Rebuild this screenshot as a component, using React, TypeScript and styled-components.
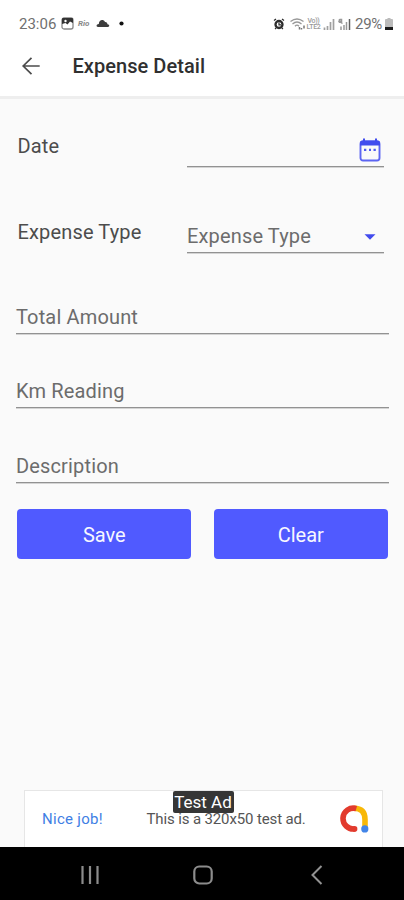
import React from 'react';
import styled, { createGlobalStyle } from 'styled-components';

const GlobalStyle = createGlobalStyle`
  * { box-sizing: border-box; }
  body { margin: 0; background: #fafafa; }
`;

const Screen = styled.div`
  display: flex;
  flex-direction: column;
  width: 404px;
  height: 900px;
  overflow: hidden;
  background: #fafafa;
  font-family: Roboto, "Liberation Sans", sans-serif;
  color: #3c3c3c;
`;

const Header = styled.header`
  height: 99px;
  flex: none;
  background: #fff;
  border-bottom: 3px solid #eeeeee;
`;

const StatusBar = styled.div`
  display: flex;
  align-items: center;
  height: 47px;
  padding: 0 11px 0 19px;
  font-size: 15px;
  color: #707070;
  white-space: nowrap;
  svg { display: block; flex: none; }
`;

const Clock = styled.span`
  width: 42px;
`;

const Brand = styled.span`
  width: 22px;
  padding-left: 4px;
  font-size: 8px;
  font-weight: 700;
  font-style: italic;
  color: #888;
`;

const StatusGroup = styled.div`
  display: flex;
  align-items: center;
`;

const SystemGroup = styled(StatusGroup)`
  margin-left: auto;
`;

const NetworkLabel = styled.span`
  display: flex;
  flex-direction: column;
  width: 17px;
  font-size: 7px;
  font-weight: 500;
  line-height: 6px;
  letter-spacing: -0.3px;
  text-align: center;
  color: #999;
`;

const Percent = styled.span`
  width: 30px;
  margin-left: 4px;
  font-size: 15px;
  letter-spacing: -0.3px;
`;

const Spacer = styled.span<{ $width: number }>`
  flex: none;
  width: ${(p) => p.$width}px;
`;

const TitleBar = styled.div`
  display: flex;
  align-items: center;
  height: 38px;
  padding-left: 20px;
  gap: 30.5px;
`;

const Title = styled.h1`
  margin: 0;
  font-size: 20px;
  font-weight: 500;
  line-height: 24px;
  letter-spacing: 0.05px;
  color: #303030;
`;

const IconButton = styled.button`
  display: flex;
  padding: 0;
  border: 0;
  background: none;
`;

const Form = styled.main`
  flex: 1;
  display: flex;
  flex-direction: column;
  padding: 0 15px 0 16px;
`;

const LabelRow = styled.div<{ $height: number }>`
  display: grid;
  grid-template-columns: 171px 196.5px;
  align-items: end;
  height: ${(p) => p.$height}px;
`;

const Label = styled.label`
  padding: 0 0 9px 1.5px;
  font-size: 20px;
  line-height: 24px;
  letter-spacing: 0.15px;
  color: #4c4c4c;
`;

const Field = styled.div<{ $height: number }>`
  display: flex;
  align-items: flex-end;
  justify-content: space-between;
  height: ${(p) => p.$height}px;
  width: 100%;
  padding-bottom: 4px;
  border-bottom: 1px solid #929292;
  box-shadow: 0 1px 0 #d4d4d4;
  font-size: 20px;
  line-height: 24px;
  letter-spacing: 0.15px;
  color: #6c6c6c;
`;

const FieldIcon = styled.span<{ $right: number; $bottom: number }>`
  display: flex;
  padding-right: ${(p) => p.$right}px;
  padding-bottom: ${(p) => p.$bottom}px;
`;

const Actions = styled.div`
  display: grid;
  grid-template-columns: 174px 174px;
  gap: 22.5px;
  padding: 26px 0 0 1.3px;
`;

const ActionButton = styled.button`
  height: 49.5px;
  padding: 2px 0 0;
  border: 0;
  border-radius: 4px;
  background: #505aff;
  color: #f7f7ff;
  font: 400 20px Roboto, sans-serif;
`;

const AdBanner = styled.aside`
  position: relative;
  display: grid;
  grid-template-columns: 122px 193.5px 1fr;
  align-items: center;
  flex: none;
  width: 359px;
  height: 57px;
  margin-left: 23.5px;
  background: #fff;
  border: 1.5px solid #e6e6e6;
  border-bottom: 0;
  font-size: 15px;
`;

const AdPraise = styled.span`
  padding-left: 17.5px;
  letter-spacing: 0.3px;
  color: #3f80e4;
`;

const AdText = styled.span`
  letter-spacing: -0.13px;
  white-space: nowrap;
  color: #555;
`;

const AdTag = styled.span`
  position: absolute;
  top: 0;
  left: 148px;
  width: 61px;
  height: 22px;
  border-radius: 2px;
  background: #363636;
  color: #fff;
  font-size: 17px;
  line-height: 23px;
  text-align: center;
  white-space: nowrap;
`;

const NavBar = styled.nav`
  display: grid;
  grid-template-columns: 1fr 1fr 1fr;
  align-items: center;
  justify-items: center;
  flex: none;
  height: 53px;
  padding: 2px 31px 0 33px;
  background: #000;
`;

const PictureIcon = () => (
  <svg width="13" height="13" viewBox="0 0 13 13">
    <rect x="1" y="1" width="11" height="11" rx="2" fill="#fff" stroke="#888" strokeWidth="1.3" />
    <path d="M1 7V2q0-1 1-1h9q1 0 1 1v4L9 4.500 6.500 7.500 4.500 6z" fill="#333" />
    <circle cx="4.500" cy="4" r="1.200" fill="#fff" />
  </svg>
);

const CloudIcon = () => (
  <svg width="14" height="9" viewBox="0 0 14 9">
    <path d="M2 8C0 8 0 5 2.800 5 3 .5 7.500 0 9 3 11 2.800 11.500 4.500 11.500 5.300 14 5.500 13.500 8 12 8z" fill="#3c3c3c" />
  </svg>
);

const DotIcon = () => (
  <svg width="5" height="5" viewBox="0 0 5 5"><circle cx="2.500" cy="2.500" r="2.100" fill="#111" /></svg>
);

const AlarmIcon = () => (
  <svg width="12" height="12" viewBox="0 0 12 12" fill="none" stroke="#2c2c2c">
    <circle cx="6" cy="6.500" r="3.500" strokeWidth="2.300" />
    <path d="M1 2.500 3 1M11 2.500 9 1M6 4.500v2.300h2M2 11l1.200-1M10 11l-1.200-1" strokeWidth="1.200" />
  </svg>
);

const WifiIcon = () => (
  <svg width="15" height="12" viewBox="0 0 15 12" fill="none" stroke="#999" strokeWidth="1.300">
    <path d="M.5 3.500Q7-1.500 13.500 3.500M2.500 6Q7 2 11.500 6M5 8.300Q7 6 9 8.300" />
    <path d="M9.500 9v2.500M11.500 10v1.500M14 7.500v3" stroke="#777" strokeWidth="1.500" />
  </svg>
);

const SignalIcon = () => (
  <svg width="12" height="12" viewBox="0 0 12 12" stroke="#a0a0a0" strokeWidth="1.700">
    <path d="M1.500 9.500V12M4.500 8v4M7.500 4v8M10.500 1v11" />
  </svg>
);

const RoamingSignalIcon = () => (
  <svg width="13" height="12" viewBox="0 0 13 12" fill="none" stroke="#999" strokeWidth="1.500">
    <path d="M1.500 1v4M1.500 1.500h2v2h-2l3 2M3 8.500V12M6 7v5M8.500 4v8" />
    <path d="M11.500 1v11" stroke="#606060" />
  </svg>
);

const BatteryIcon = () => (
  <svg width="8" height="12" viewBox="0 0 8 12">
    <path d="M2.500 0h3v1H7q1 0 1 1v10H0V2q0-1 1-1h1.500z" fill="#bbb" />
    <rect y="9" width="8" height="3" fill="#1c1c1c" />
  </svg>
);

const BackArrow = () => (
  <svg width="22" height="22" viewBox="0 0 22 22" fill="none" stroke="#4c4c4c" strokeWidth="1.700">
    <path d="M19.700 11H3M11.500 2.800 3.200 11l8.300 8.200" />
  </svg>
);

const CalendarIcon = () => (
  <svg width="22" height="24" viewBox="0 0 22 24">
    <rect x="1.500" y="3.500" width="19" height="19" rx="2.500" fill="#fafafa" stroke="#5c65f2" strokeWidth="1.900" />
    <path d="M1 7.500V5q0-2.500 2.500-2.500H4V.5h2v2h10v-2h2v2h.5Q21 2.500 21 5v2.500z" fill="#414cee" />
    <path d="M5 10.700h2.300V13H5zM10 10.700h2V13h-2zM14.500 10.700h2.300V13h-2.300z" fill="#505aee" />
  </svg>
);

const CaretIcon = () => (
  <svg width="12" height="6" viewBox="0 0 12 6"><path d="M.5 .3h11L6 5.800z" fill="#424bed" /></svg>
);

const AdLogo = () => (
  <svg width="30" height="30" viewBox="0 0 30 30" fill="none" strokeWidth="5.600">
    <path d="M14 4.300Q25 4.300 25 15.500V24" stroke="#f8b807" />
    <path d="M16.300 4.600A10.400 10.400 0 1 0 14.800 24.900" stroke="#e23b2e" />
    <circle cx="14.600" cy="24.900" r="2.800" fill="#e23b2e" stroke="none" />
    <circle cx="24.800" cy="24.900" r="3.600" fill="#4285e8" stroke="none" />
  </svg>
);

const RecentsIcon = () => (
  <svg width="20" height="20" viewBox="0 0 20 20" stroke="#8c8c8c" strokeWidth="2.200">
    <path d="M2.500 1v18M10 1v18M17.500 1v18" />
  </svg>
);

const HomeIcon = () => (
  <svg width="20" height="20" viewBox="0 0 20 20" fill="none" stroke="#8c8c8c" strokeWidth="2.200">
    <rect x="1.300" y="1.500" width="17.400" height="17" rx="5" />
  </svg>
);

const BackIcon = () => (
  <svg width="20" height="20" viewBox="0 0 20 20" fill="none" stroke="#929292" strokeWidth="2">
    <path d="M15.500 1 6.500 10l9 9" />
  </svg>
);

const TextField = ({ label, height }: { label: string; height: number }) => (
  <Field $height={height}>{label}</Field>
);

export default function App() {
  return (
    <Screen>
      <GlobalStyle />
      <Header>
        <StatusBar>
          <StatusGroup>
            <Clock>23:06</Clock>
            <PictureIcon />
            <Brand>Rio</Brand>
            <CloudIcon />
            <Spacer $width={9} />
            <DotIcon />
          </StatusGroup>
          <SystemGroup>
            <AlarmIcon />
            <Spacer $width={5} />
            <WifiIcon />
            <NetworkLabel>
              <span>Vo))</span>
              <span>LTE2</span>
            </NetworkLabel>
            <Spacer $width={1} />
            <SignalIcon />
            <Spacer $width={3} />
            <RoamingSignalIcon />
            <Percent>29%</Percent>
            <BatteryIcon />
          </SystemGroup>
        </StatusBar>
        <TitleBar>
          <IconButton aria-label="Back"><BackArrow /></IconButton>
          <Title>Expense Detail</Title>
        </TitleBar>
      </Header>
      <Form>
        <LabelRow $height={68}>
          <Label>Date</Label>
          <Field $height={40}>
            <span />
            <FieldIcon $right={2.5} $bottom={0}><CalendarIcon /></FieldIcon>
          </Field>
        </LabelRow>
        <LabelRow $height={86}>
          <Label>Expense Type</Label>
          <Field $height={40}>
            <span>Expense Type</span>
            <FieldIcon $right={7.5} $bottom={8.5}><CaretIcon /></FieldIcon>
          </Field>
        </LabelRow>
        <TextField label="Total Amount" height={81} />
        <TextField label="Km Reading" height={74} />
        <TextField label="Description" height={75} />
        <Actions>
          <ActionButton>Save</ActionButton>
          <ActionButton>Clear</ActionButton>
        </Actions>
      </Form>
      <AdBanner>
        <AdPraise>Nice job!</AdPraise>
        <AdText>This is a 320x50 test ad.</AdText>
        <AdLogo />
        <AdTag>Test Ad</AdTag>
      </AdBanner>
      <NavBar>
        <RecentsIcon />
        <HomeIcon />
        <BackIcon />
      </NavBar>
    </Screen>
  );
}
